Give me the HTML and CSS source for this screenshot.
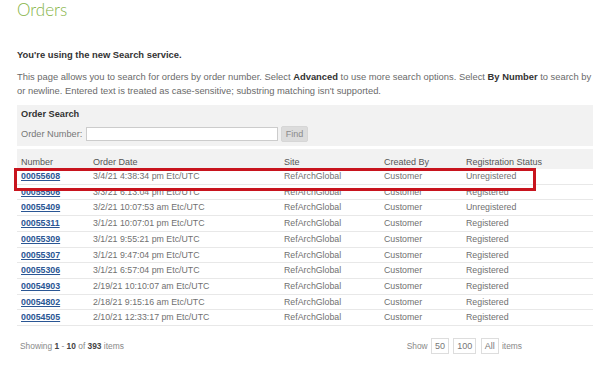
FILE: index.html
```html
<!DOCTYPE html>
<html lang="en">
<head>
    <meta charset="UTF-8">
    <meta name="viewport" content="width=device-width, initial-scale=1.0">
    <title>Orders</title>
    <link rel="stylesheet" href="styles.css">
</head>
<body>
    <div class="page">
        <h1 class="page-title">Orders</h1>

        <p class="notice">You're using the new Search service.</p>
        <p class="intro">This page allows you to search for orders by order number. Select <b>Advanced</b> to use more search options. Select <b>By Number</b> to search by a list of order numbers separated by comma<br>or newline. Entered text is treated as case-sensitive; substring matching isn't supported.</p>

        <form class="search-box">
            <div class="search-title">Order Search</div>
            <div class="search-row">
                <label for="orderNo">Order Number:</label>
                <input type="text" id="orderNo">
                <button type="submit">Find</button>
            </div>
        </form>

        <div class="table-wrap">
            <table class="orders">
                <colgroup>
                    <col style="width: 72px">
                    <col style="width: 191px">
                    <col style="width: 100px">
                    <col style="width: 82px">
                    <col>
                </colgroup>
                <thead>
                    <tr>
                        <th>Number</th>
                        <th>Order Date</th>
                        <th>Site</th>
                        <th>Created By</th>
                        <th>Registration Status</th>
                    </tr>
                </thead>
                <tbody>
                    <tr><td><a href="#">00055608</a></td><td>3/4/21 4:38:34 pm Etc/UTC</td><td>RefArchGlobal</td><td>Customer</td><td>Unregistered</td></tr>
                    <tr><td><a href="#">00055506</a></td><td>3/3/21 6:13:04 pm Etc/UTC</td><td>RefArchGlobal</td><td>Customer</td><td>Registered</td></tr>
                    <tr><td><a href="#">00055409</a></td><td>3/2/21 10:07:53 am Etc/UTC</td><td>RefArchGlobal</td><td>Customer</td><td>Unregistered</td></tr>
                    <tr><td><a href="#">00055311</a></td><td>3/1/21 10:07:01 pm Etc/UTC</td><td>RefArchGlobal</td><td>Customer</td><td>Registered</td></tr>
                    <tr><td><a href="#">00055309</a></td><td>3/1/21 9:55:21 pm Etc/UTC</td><td>RefArchGlobal</td><td>Customer</td><td>Registered</td></tr>
                    <tr><td><a href="#">00055307</a></td><td>3/1/21 9:47:04 pm Etc/UTC</td><td>RefArchGlobal</td><td>Customer</td><td>Registered</td></tr>
                    <tr><td><a href="#">00055306</a></td><td>3/1/21 6:57:04 pm Etc/UTC</td><td>RefArchGlobal</td><td>Customer</td><td>Registered</td></tr>
                    <tr><td><a href="#">00054903</a></td><td>2/19/21 10:10:07 am Etc/UTC</td><td>RefArchGlobal</td><td>Customer</td><td>Registered</td></tr>
                    <tr><td><a href="#">00054802</a></td><td>2/18/21 9:15:16 am Etc/UTC</td><td>RefArchGlobal</td><td>Customer</td><td>Registered</td></tr>
                    <tr><td><a href="#">00054505</a></td><td>2/10/21 12:33:17 pm Etc/UTC</td><td>RefArchGlobal</td><td>Customer</td><td>Registered</td></tr>
                </tbody>
            </table>
            <div class="highlight"></div>
        </div>

        <div class="list-footer">
            <span class="count">Showing <b>1</b> - <b>10</b> of <b>393</b> items</span>
            <span class="pager">Show <a href="#">50</a> <a href="#">100</a> <a href="#">All</a> items</span>
        </div>
    </div>
</body>
</html>
```

FILE: styles.css
```css
/* Basic styling */
body {
    margin: 0;
    overflow: hidden;
    font-family: "Liberation Sans", Arial, sans-serif;
    color: #666;
    background: #fff;
}
.page {
    width: 700px;
    padding-left: 17px;
}
.page-title {
    margin: 0;
    padding-top: 1px;
    font-family: Lato, "Liberation Sans", sans-serif;
    font-weight: 300;
    font-size: 17px;
    line-height: 18px;
    color: #86b447;
}
.notice {
    margin: 30px 0 0;
    font-size: 9.4px;
    line-height: 12px;
    font-weight: bold;
    color: #333;
}
.intro {
    margin: 9px 0 0;
    font-size: 9.4px;
    line-height: 14px;
    white-space: nowrap;
    color: #6a6a6a;
}
.intro b {
    color: #333;
}
.search-box {
    margin-top: 7px;
    padding: 3px 4px 4px;
    background: #f2f2f2;
}
.search-title {
    font-size: 9.2px;
    line-height: 12px;
    font-weight: bold;
    color: #333;
}
.search-row {
    display: flex;
    align-items: center;
    gap: 3px;
    margin-top: 6px;
    font-size: 9.2px;
    color: #777;
}
.search-row label {
    flex-shrink: 0;
    width: 62px;
    white-space: nowrap;
}
.search-row input {
    box-sizing: border-box;
    width: 192px;
    height: 14px;
    margin: 0;
    padding: 0 3px;
    border: 1px solid #ccc;
    background: #fff;
}
.search-row button {
    width: 27px;
    height: 16px;
    padding: 0;
    border: 1px solid #d6d6d6;
    border-radius: 2px;
    background: #dcdcdc;
    color: #8a8a8a;
    font-family: inherit;
    font-size: 9px;
}
.table-wrap {
    position: relative;
    margin-top: 3px;
}
.orders {
    width: 700px;
    table-layout: fixed;
    border-collapse: collapse;
    font-size: 8.8px;
}
.orders th {
    padding: 7px 4px 1px;
    line-height: 12px;
    text-align: left;
    font-weight: normal;
    color: #555;
    background: #f2f2f2;
    font-size: 9px;
}
.orders td {
    padding: 0 4px;
    line-height: 14.7px;
    border-bottom: 1px solid #e8e8e8;
    white-space: nowrap;
    color: #707070;
}
.orders a {
    color: #2a5694;
    font-weight: bold;
}
/* annotation box drawn over the first result */
.highlight {
    position: absolute;
    top: 19px;
    left: -3px;
    width: 522px;
    height: 23px;
    box-sizing: border-box;
    border: 3px solid #c8141e;
}
.list-footer {
    display: flex;
    justify-content: space-between;
    align-items: center;
    width: 502px;
    margin-top: 12px;
    padding-left: 3px;
    font-size: 8.4px;
    color: #888;
}
.list-footer b {
    color: #444;
}
.pager a {
    display: inline-block;
    padding: 2px 3px;
    margin: 0 1px;
    border: 1px solid #ddd;
    color: #777;
    text-decoration: none;
    font-size: 9px;
}
```
